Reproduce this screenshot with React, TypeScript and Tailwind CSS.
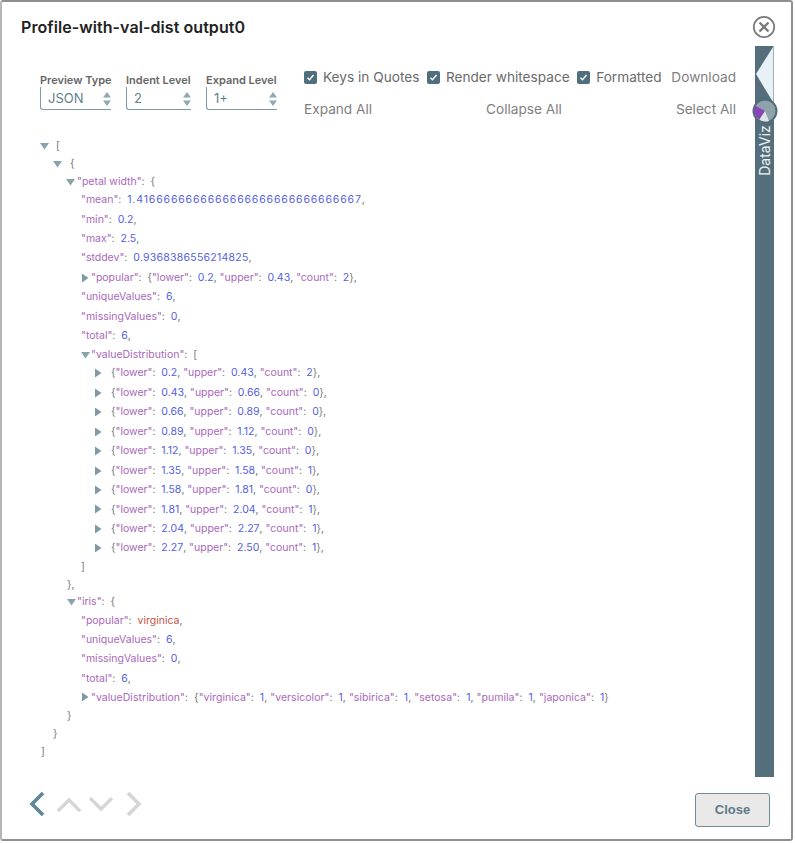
import React from 'react';

type Token = { t: string; c: 'k' | 'n' | 's' | 'p'; cls?: string };
type Row = { left: number; arrow?: 'down' | 'right'; arrowLeft?: number; h: number; tokens: Token[]; cls?: string };

const k = (t: string): Token => ({ t, c: 'k' });
const n = (t: string, cls?: string): Token => ({ t, c: 'n', cls });
const s = (t: string): Token => ({ t, c: 's' });
const p = (t: string): Token => ({ t, c: 'p' });

const colorClass = {
  k: 'text-[#a968bb]',
  n: 'text-[#5460e4]',
  s: 'text-[#c4534a]',
  p: 'text-[#777777]',
};

function leaf(key: string, value: string, cls?: string): Row {
  return { left: 81, h: 19.4, tokens: [k(`"${key}"`), p(':  '), n(value, cls), p(',')] };
}

function bucket(lower: string, upper: string, count: string): Row {
  return {
    left: 111,
    arrow: 'right',
    arrowLeft: 94,
    h: 19.45,
    tokens: [
      p('{'), k('"lower"'), p(':  '), n(lower), p(', '),
      k('"upper"'), p(':  '), n(upper), p(', '),
      k('"count"'), p(':  '), n(count), p('},'),
    ],
  };
}

const rows: Row[] = [
  { left: 56, arrow: 'down', arrowLeft: 40, h: 18, tokens: [p('[')] },
  { left: 70, arrow: 'down', arrowLeft: 53, h: 17.5, tokens: [p('{')] },
  { left: 77, arrow: 'down', arrowLeft: 66, h: 18, tokens: [k('"petal width"'), p(':  {')] },
  leaf('mean', '1.4166666666666666666666666666667', 'tracking-[0.85px]'),
  leaf('min', '0.2'),
  leaf('max', '2.5'),
  leaf('stddev', '0.9368386556214825', 'tracking-[0.25px]'),
  {
    left: 91, arrow: 'right', arrowLeft: 81, h: 19.4,
    tokens: [
      k('"popular"'), p(':  {'), k('"lower"'), p(':  '), n('0.2'), p(', '),
      k('"upper"'), p(':  '), n('0.43'), p(', '), k('"count"'), p(':  '), n('2'), p('},'),
    ],
  },
  leaf('uniqueValues', '6'),
  leaf('missingValues', '0'),
  leaf('total', '6'),
  { left: 91, arrow: 'down', arrowLeft: 81, h: 18, tokens: [k('"valueDistribution"'), p(':  [')] },
  bucket('0.2', '0.43', '2'),
  bucket('0.43', '0.66', '0'),
  bucket('0.66', '0.89', '0'),
  bucket('0.89', '1.12', '0'),
  bucket('1.12', '1.35', '0'),
  bucket('1.35', '1.58', '1'),
  bucket('1.58', '1.81', '0'),
  bucket('1.81', '2.04', '1'),
  bucket('2.04', '2.27', '1'),
  bucket('2.27', '2.50', '1'),
  { left: 81, h: 18, tokens: [p(']')] },
  { left: 67, h: 17.5, tokens: [p('},')] },
  { left: 77, arrow: 'down', arrowLeft: 67, h: 17.5, tokens: [k('"iris"'), p(':  {')] },
  { left: 81, h: 19, tokens: [k('"popular"'), p(':  '), s('virginica'), p(',')] },
  leaf('uniqueValues', '6'),
  leaf('missingValues', '0'),
  leaf('total', '6'),
  {
    left: 91, arrow: 'right', arrowLeft: 81, h: 18.5, cls: 'tracking-[0.04px]',
    tokens: [
      k('"valueDistribution"'), p(':  {'), k('"virginica"'), p(':  '), n('1'), p(', '),
      k('"versicolor"'), p(':  '), n('1'), p(', '), k('"sibirica"'), p(':  '), n('1'), p(', '),
      k('"setosa"'), p(':  '), n('1'), p(', '), k('"pumila"'), p(':  '), n('1'), p(', '),
      k('"japonica"'), p(':  '), n('1'), p('}'),
    ],
  },
  { left: 67, h: 18, tokens: [p('}')] },
  { left: 53, h: 18, tokens: [p('}')] },
  { left: 41, h: 18, tokens: [p(']')] },
];

function Arrow({ dir }: { dir: 'down' | 'right' }) {
  return (
    <svg width="9" height="9" viewBox="0 0 9 9" className="shrink-0">
      {dir === 'down' ? <path d="M0 1.5h9L4.5 8z" fill="#8aa3ad" /> : <path d="M1 0v9l6.5-4.5z" fill="#7f9aa5" />}
    </svg>
  );
}

function Select({ label, value, width }: { label: string; value: string; width: string }) {
  return (
    <div className={`flex flex-col ${width}`}>
      <div className="text-[11px] leading-[14px] font-semibold text-[#666] whitespace-nowrap">{label}</div>
      <div className="flex h-[23px] items-center justify-between rounded-bl-[3px] border-b border-l border-[#7f9ba6] pt-[2px] pl-[7px]">
        <span className="text-[13px] text-[#5f7f8c]">{value}</span>
        <svg width="8" height="16" viewBox="0 0 8 16">
          <path d="M4 1l4 5.5H0z" fill="#8ea9b3" />
          <path d="M4 15l4-5.5H0z" fill="#8ea9b3" />
        </svg>
      </div>
    </div>
  );
}

function Check({ label }: { label: string }) {
  return (
    <label className="flex items-center gap-[6px] whitespace-nowrap">
      <span className="flex h-[13px] w-[13px] items-center justify-center rounded-[2px] bg-[#4f6f7d]">
        <svg width="9" height="9" viewBox="0 0 9 9">
          <path d="M1.5 4.8l2 2 4-4.8" fill="none" stroke="#fff" strokeWidth="1.4" />
        </svg>
      </span>
      <span>{label}</span>
    </label>
  );
}

export default function App() {
  return (
    <div className="h-[843px] w-[795px] bg-white font-['Inter','Liberation_Sans',sans-serif]">
      <div className="flex h-[841px] w-[793px] flex-col rounded-[3px] border-2 border-t-[#8f8f8f] border-r-[#8f8f8f] border-b-[#8f8f8f] border-l-[#b5b5b5] bg-white">
        <div className="flex h-[44px] shrink-0 items-center justify-between pt-[6px] pr-[15px] pl-[19px]">
          <div className="text-[16px] font-semibold tracking-[0.07px] text-[#222]">Profile-with-val-dist output0</div>
          <svg width="24" height="24" viewBox="0 0 24 24">
            <circle cx="12" cy="12" r="10.2" fill="none" stroke="#7b7b7b" strokeWidth="1.8" />
            <path d="M7.5 7.5l9 9M16.5 7.5l-9 9" stroke="#7b7b7b" strokeWidth="2.4" />
          </svg>
        </div>

        <div className="flex min-h-0 flex-1">
          <div className="min-w-0 flex-1">
            <div className="flex h-[87px] pt-[21px] pl-[38px]">
              <div className="flex gap-[15px] pt-[6px]">
                <Select label="Preview Type" value="JSON" width="w-[71px]" />
                <Select label="Indent Level" value="2" width="w-[65px]" />
                <Select label="Expand Level" value="1+" width="w-[71px]" />
              </div>
              <div className="ml-[27px] w-[432px] text-[13.65px] text-[#6b6b6b]">
                <div className="flex h-[20px] items-center justify-between">
                  <div className="flex gap-[7.5px]">
                    <Check label="Keys in Quotes" />
                    <Check label="Render whitespace" />
                    <Check label="Formatted" />
                  </div>
                  <span className="text-[#808080]">Download</span>
                </div>
                <div className="mt-[12px] flex h-[20px] items-center justify-between text-[#808080]">
                  <span>Expand All</span>
                  <span>Collapse All</span>
                  <span>Select All</span>
                </div>
              </div>
            </div>

            <div className="pt-[4px] text-[10.5px]">
              {rows.map((r, i) => (
                <div key={i} className={`relative flex items-center whitespace-pre ${r.cls ?? ''}`} style={{ height: r.h, paddingLeft: r.left - 2 }}>
                  {r.arrow ? (
                    <span className="absolute top-1/2 -translate-y-1/2" style={{ left: (r.arrowLeft ?? 0) - 2 }}>
                      <Arrow dir={r.arrow} />
                    </span>
                  ) : null}
                  {r.tokens.map((tk, j) => (
                    <span key={j} className={`${colorClass[tk.c]} ${tk.cls ?? ''}`}>{tk.t}</span>
                  ))}
                </div>
              ))}
            </div>
          </div>

          <div className="relative mr-[17px] h-[731px] w-[19px] shrink-0 bg-[#546f7b]">
            <svg width="19" height="58" viewBox="0 0 19 58" className="absolute top-0 left-0">
              <path d="M18 1L1 28l17 28z" fill="#e8f1f5" />
              <path d="M18.5 0v58" stroke="#9db2bb" strokeWidth="1" />
            </svg>
            <svg width="26" height="26" viewBox="0 0 26 26" className="absolute top-[52px] -left-[3.5px]">
              <circle cx="13" cy="13" r="11.5" fill="#8ea3ab" stroke="#4f6c79" strokeWidth="2" />
              <path d="M13 13L3 7.5A11 11 0 0 0 7.5 21.5z" fill="#8a45b5" />
              <path d="M13 13l-5.5 8.5A11 11 0 0 0 17 23z" fill="#dfe4e6" />
            </svg>
            <div className="absolute top-[77px] left-0 flex h-[55px] w-[19px] items-center justify-center">
              <span className="-rotate-90 text-[14px] whitespace-nowrap text-[#eef3f5]">DataViz</span>
            </div>
          </div>
        </div>

        <div className="flex h-[64px] shrink-0 items-center justify-between pr-[21px] pl-[27px]">
          <div className="flex h-[24px] -translate-y-[3px] items-center">
            <svg width="16" height="24" viewBox="0 0 16 24">
              <path d="M14 1L3 12l11 11" fill="none" stroke="#5f8797" strokeWidth="3.6" />
            </svg>
            <svg width="24" height="15" viewBox="0 0 24 15" className="ml-[12px]">
              <path d="M1 14L12 3l11 11" fill="none" stroke="#d6d6d6" strokeWidth="3.4" />
            </svg>
            <svg width="24" height="15" viewBox="0 0 24 15" className="ml-[8px]">
              <path d="M1 1l11 11L23 1" fill="none" stroke="#d6d6d6" strokeWidth="3.4" />
            </svg>
            <svg width="16" height="24" viewBox="0 0 16 24" className="ml-[13px]">
              <path d="M2 1l11 11L2 23" fill="none" stroke="#d6d6d6" strokeWidth="3.6" />
            </svg>
          </div>
          <button className="mt-[6px] h-[34px] w-[75px] rounded-[3px] border border-[#6f8c98] bg-[#e9e9e9] font-['Liberation_Sans',sans-serif] text-[13px] font-bold text-[#5f7a87]">
            Close
          </button>
        </div>
      </div>
    </div>
  );
}
